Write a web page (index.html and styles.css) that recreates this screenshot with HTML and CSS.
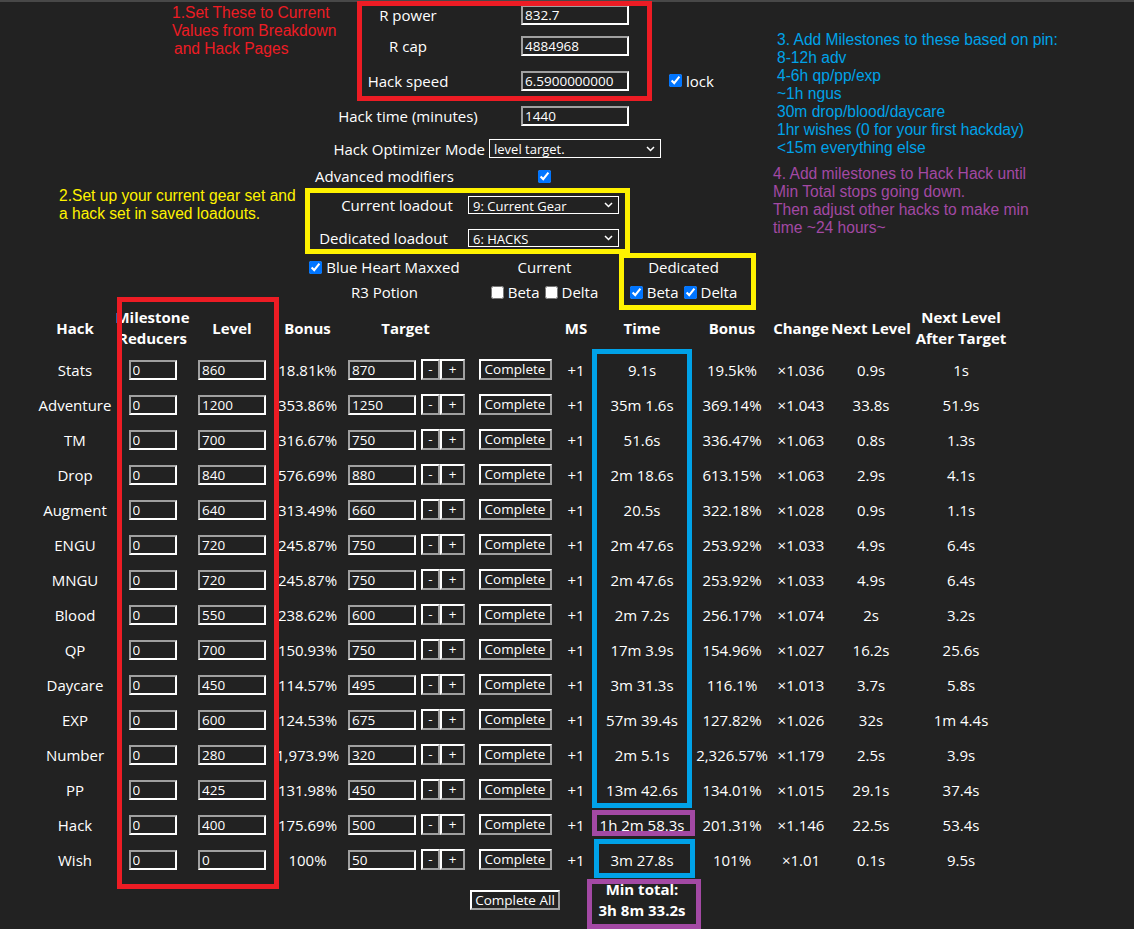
FILE: index.html
```html
<!DOCTYPE html>
<html lang="en">
<head>
<meta charset="utf-8">
<title>Hack Calculator</title>
<link rel="stylesheet" href="styles.css">
</head>
<body>
<section class="settings">
  <div class="frow field r1"><span class="flabel">R power</span><input class="inp topinp" value="832.7"></div>
  <div class="frow field"><span class="flabel">R cap</span><input class="inp topinp" value="4884968"></div>
  <div class="frow field"><span class="flabel">Hack speed</span><input class="inp topinp" value="6.5900000000"><label class="lock"><input type="checkbox" class="cb" checked>lock</label></div>
  <div class="frow field"><span class="flabel">Hack time (minutes)</span><input class="inp topinp" value="1440"></div>
  <div class="frow mode-row"><span class="mode-label">Hack Optimizer Mode</span><span class="selwrap sel-mode"><select class="sel"><option>level target.</option></select><svg class="chev" width="9" height="6" viewBox="0 0 9 6"><path d="M1 1l3.5 3.5L8 1" fill="none" stroke="#fff" stroke-width="1.5"/></svg></span></div>
  <div class="frow grid3 r6"><span class="cell">Advanced modifiers</span><span class="cell"><input type="checkbox" class="cb" checked></span><span class="cell"></span></div>
  <div class="frow load-cur"><span class="cell lbl-cur">Current loadout</span><span class="selwrap sel-load"><select class="sel"><option>9: Current Gear</option></select><svg class="chev" width="9" height="6" viewBox="0 0 9 6"><path d="M1 1l3.5 3.5L8 1" fill="none" stroke="#fff" stroke-width="1.5"/></svg></span></div>
  <div class="frow load-ded"><span class="cell lbl-ded">Dedicated loadout</span><span class="selwrap sel-load"><select class="sel"><option>6: HACKS</option></select><svg class="chev" width="9" height="6" viewBox="0 0 9 6"><path d="M1 1l3.5 3.5L8 1" fill="none" stroke="#fff" stroke-width="1.5"/></svg></span></div>
  <div class="frow grid3 r9"><span class="cell"><label class="chk"><input type="checkbox" class="cb" checked>Blue Heart Maxxed</label></span><span class="cell">Current</span><span class="cell">Dedicated</span></div>
  <div class="frow grid3 r10"><span class="cell">R3 Potion</span><span class="cell pots"><label class="chk"><input type="checkbox" class="cb">Beta</label><label class="chk"><input type="checkbox" class="cb">Delta</label></span><span class="cell pots"><label class="chk"><input type="checkbox" class="cb" checked>Beta</label><label class="chk"><input type="checkbox" class="cb" checked>Delta</label></span></div>
</section>

<section class="hacks">
  <div class="trow thead">
    <span class="c">Hack</span><span class="c">Milestone<br>Reducers</span><span class="c">Level</span><span class="c">Bonus</span><span class="c">Target</span><span class="c"></span><span class="c">MS</span><span class="c">Time</span><span class="c">Bonus</span><span class="c">Change</span><span class="c">Next Level</span><span class="c">Next Level<br>After Target</span>
  </div>
  <div class="trow"><span class="c">Stats</span><span class="c"><input class="inp ms" value="0"></span><span class="c"><input class="inp lv" value="860"></span><span class="c">18.81k%</span><span class="c tgt"><input class="inp lv" value="870"><button class="btn pm">-</button><button class="btn pl">+</button></span><span class="c"><button class="btn cpl">Complete</button></span><span class="c">+1</span><span class="c">9.1s</span><span class="c">19.5k%</span><span class="c">×1.036</span><span class="c">0.9s</span><span class="c">1s</span></div>
  <div class="trow"><span class="c">Adventure</span><span class="c"><input class="inp ms" value="0"></span><span class="c"><input class="inp lv" value="1200"></span><span class="c">353.86%</span><span class="c tgt"><input class="inp lv" value="1250"><button class="btn pm">-</button><button class="btn pl">+</button></span><span class="c"><button class="btn cpl">Complete</button></span><span class="c">+1</span><span class="c">35m 1.6s</span><span class="c">369.14%</span><span class="c">×1.043</span><span class="c">33.8s</span><span class="c">51.9s</span></div>
  <div class="trow"><span class="c">TM</span><span class="c"><input class="inp ms" value="0"></span><span class="c"><input class="inp lv" value="700"></span><span class="c">316.67%</span><span class="c tgt"><input class="inp lv" value="750"><button class="btn pm">-</button><button class="btn pl">+</button></span><span class="c"><button class="btn cpl">Complete</button></span><span class="c">+1</span><span class="c">51.6s</span><span class="c">336.47%</span><span class="c">×1.063</span><span class="c">0.8s</span><span class="c">1.3s</span></div>
  <div class="trow"><span class="c">Drop</span><span class="c"><input class="inp ms" value="0"></span><span class="c"><input class="inp lv" value="840"></span><span class="c">576.69%</span><span class="c tgt"><input class="inp lv" value="880"><button class="btn pm">-</button><button class="btn pl">+</button></span><span class="c"><button class="btn cpl">Complete</button></span><span class="c">+1</span><span class="c">2m 18.6s</span><span class="c">613.15%</span><span class="c">×1.063</span><span class="c">2.9s</span><span class="c">4.1s</span></div>
  <div class="trow"><span class="c">Augment</span><span class="c"><input class="inp ms" value="0"></span><span class="c"><input class="inp lv" value="640"></span><span class="c">313.49%</span><span class="c tgt"><input class="inp lv" value="660"><button class="btn pm">-</button><button class="btn pl">+</button></span><span class="c"><button class="btn cpl">Complete</button></span><span class="c">+1</span><span class="c">20.5s</span><span class="c">322.18%</span><span class="c">×1.028</span><span class="c">0.9s</span><span class="c">1.1s</span></div>
  <div class="trow"><span class="c">ENGU</span><span class="c"><input class="inp ms" value="0"></span><span class="c"><input class="inp lv" value="720"></span><span class="c">245.87%</span><span class="c tgt"><input class="inp lv" value="750"><button class="btn pm">-</button><button class="btn pl">+</button></span><span class="c"><button class="btn cpl">Complete</button></span><span class="c">+1</span><span class="c">2m 47.6s</span><span class="c">253.92%</span><span class="c">×1.033</span><span class="c">4.9s</span><span class="c">6.4s</span></div>
  <div class="trow"><span class="c">MNGU</span><span class="c"><input class="inp ms" value="0"></span><span class="c"><input class="inp lv" value="720"></span><span class="c">245.87%</span><span class="c tgt"><input class="inp lv" value="750"><button class="btn pm">-</button><button class="btn pl">+</button></span><span class="c"><button class="btn cpl">Complete</button></span><span class="c">+1</span><span class="c">2m 47.6s</span><span class="c">253.92%</span><span class="c">×1.033</span><span class="c">4.9s</span><span class="c">6.4s</span></div>
  <div class="trow"><span class="c">Blood</span><span class="c"><input class="inp ms" value="0"></span><span class="c"><input class="inp lv" value="550"></span><span class="c">238.62%</span><span class="c tgt"><input class="inp lv" value="600"><button class="btn pm">-</button><button class="btn pl">+</button></span><span class="c"><button class="btn cpl">Complete</button></span><span class="c">+1</span><span class="c">2m 7.2s</span><span class="c">256.17%</span><span class="c">×1.074</span><span class="c">2s</span><span class="c">3.2s</span></div>
  <div class="trow"><span class="c">QP</span><span class="c"><input class="inp ms" value="0"></span><span class="c"><input class="inp lv" value="700"></span><span class="c">150.93%</span><span class="c tgt"><input class="inp lv" value="750"><button class="btn pm">-</button><button class="btn pl">+</button></span><span class="c"><button class="btn cpl">Complete</button></span><span class="c">+1</span><span class="c">17m 3.9s</span><span class="c">154.96%</span><span class="c">×1.027</span><span class="c">16.2s</span><span class="c">25.6s</span></div>
  <div class="trow"><span class="c">Daycare</span><span class="c"><input class="inp ms" value="0"></span><span class="c"><input class="inp lv" value="450"></span><span class="c">114.57%</span><span class="c tgt"><input class="inp lv" value="495"><button class="btn pm">-</button><button class="btn pl">+</button></span><span class="c"><button class="btn cpl">Complete</button></span><span class="c">+1</span><span class="c">3m 31.3s</span><span class="c">116.1%</span><span class="c">×1.013</span><span class="c">3.7s</span><span class="c">5.8s</span></div>
  <div class="trow"><span class="c">EXP</span><span class="c"><input class="inp ms" value="0"></span><span class="c"><input class="inp lv" value="600"></span><span class="c">124.53%</span><span class="c tgt"><input class="inp lv" value="675"><button class="btn pm">-</button><button class="btn pl">+</button></span><span class="c"><button class="btn cpl">Complete</button></span><span class="c">+1</span><span class="c">57m 39.4s</span><span class="c">127.82%</span><span class="c">×1.026</span><span class="c">32s</span><span class="c">1m 4.4s</span></div>
  <div class="trow"><span class="c">Number</span><span class="c"><input class="inp ms" value="0"></span><span class="c"><input class="inp lv" value="280"></span><span class="c">1,973.9%</span><span class="c tgt"><input class="inp lv" value="320"><button class="btn pm">-</button><button class="btn pl">+</button></span><span class="c"><button class="btn cpl">Complete</button></span><span class="c">+1</span><span class="c">2m 5.1s</span><span class="c">2,326.57%</span><span class="c">×1.179</span><span class="c">2.5s</span><span class="c">3.9s</span></div>
  <div class="trow"><span class="c">PP</span><span class="c"><input class="inp ms" value="0"></span><span class="c"><input class="inp lv" value="425"></span><span class="c">131.98%</span><span class="c tgt"><input class="inp lv" value="450"><button class="btn pm">-</button><button class="btn pl">+</button></span><span class="c"><button class="btn cpl">Complete</button></span><span class="c">+1</span><span class="c">13m 42.6s</span><span class="c">134.01%</span><span class="c">×1.015</span><span class="c">29.1s</span><span class="c">37.4s</span></div>
  <div class="trow"><span class="c">Hack</span><span class="c"><input class="inp ms" value="0"></span><span class="c"><input class="inp lv" value="400"></span><span class="c">175.69%</span><span class="c tgt"><input class="inp lv" value="500"><button class="btn pm">-</button><button class="btn pl">+</button></span><span class="c"><button class="btn cpl">Complete</button></span><span class="c">+1</span><span class="c">1h 2m 58.3s</span><span class="c">201.31%</span><span class="c">×1.146</span><span class="c">22.5s</span><span class="c">53.4s</span></div>
  <div class="trow"><span class="c">Wish</span><span class="c"><input class="inp ms" value="0"></span><span class="c"><input class="inp lv" value="0"></span><span class="c">100%</span><span class="c tgt"><input class="inp lv" value="50"><button class="btn pm">-</button><button class="btn pl">+</button></span><span class="c"><button class="btn cpl">Complete</button></span><span class="c">+1</span><span class="c">3m 27.8s</span><span class="c">101%</span><span class="c">×1.01</span><span class="c">0.1s</span><span class="c">9.5s</span></div>
  <div class="trow tfoot">
    <span class="c"></span><span class="c"></span><span class="c"></span><span class="c"></span><span class="c"></span><span class="c"><button class="btn cpl-all">Complete All</button></span><span class="c"></span><span class="c mintotal">Min total:<br>3h 8m 33.2s</span>
  </div>
</section>

<div class="note note-red">1.Set These to Current<br>Values from Breakdown<br><span class="indent">and Hack Pages</span></div>
<div class="note note-yellow">2.Set up your current gear set and<br>a hack set in saved loadouts.</div>
<div class="note note-blue">3. Add Milestones to these based on pin:<br>8-12h adv<br>4-6h qp/pp/exp<br>~1h ngus<br>30m drop/blood/daycare<br>1hr wishes (0 for your first hackday)<br>&lt;15m everything else</div>
<div class="note note-purple">4. Add milestones to Hack Hack until<br>Min Total stops going down.<br>Then adjust other hacks to make min<br>time ~24 hours~</div>

<div class="mark mark-red-top"></div>
<div class="mark mark-red-big"></div>
<div class="mark mark-yellow-1"></div>
<div class="mark mark-yellow-2"></div>
<div class="mark mark-blue-big"></div>
<div class="mark mark-purple-hack"></div>
<div class="mark mark-blue-wish"></div>
<div class="mark mark-purple-min"></div>
</body>
</html>
```
FILE: styles.css
```css
html {
  background: #222222;
  overflow: hidden;
}
body {
  margin: 0;
  border-top: 2px solid #484848;
  background: #222222;
  color: #ffffff;
  font-family: "Open Sans", "Noto Sans", sans-serif;
  font-size: 15px;
  overflow: hidden;
  height: 927px;
}

/* ---------- settings block ---------- */
.settings {
  display: flex;
  flex-direction: column;
}
.frow {
  display: flex;
  align-items: center;
  white-space: nowrap;
}
.field {
  height: 35px;
  padding-left: 308px;
}
.field.r1 {
  height: 26px;
}
.flabel {
  width: 200px;
  display: flex;
  justify-content: center;
}
.inp {
  box-sizing: border-box;
  height: 20px;
  margin: 0;
  padding: 0 2px;
  background: #222222;
  color: #ffffff;
  border: 2px solid;
  border-color: #a0a0a0 #ffffff #ffffff #a0a0a0;
  font-family: "Open Sans", "Noto Sans", sans-serif;
  font-size: 13.5px;
  font-weight: 500;
}
.topinp {
  width: 108px;
  margin-left: 13px;
}
.cb {
  width: 13px;
  height: 13px;
  margin: 0;
}
.lock {
  display: inline-flex;
  align-items: center;
  gap: 4px;
  margin-left: 40px;
}
.mode-row {
  height: 31px;
  padding-left: 308px;
}
.mode-label {
  width: 177px;
  display: flex;
  justify-content: flex-end;
}
.selwrap {
  position: relative;
  display: inline-block;
}
.sel {
  appearance: none;
  -webkit-appearance: none;
  box-sizing: border-box;
  display: block;
  margin: 0;
  padding: 0 0 0 4px;
  background: #222222;
  color: #ffffff;
  border: 1px solid #ffffff;
  border-radius: 0;
  font-family: "Open Sans", "Noto Sans", sans-serif;
  font-size: 13px;
  font-weight: 500;
}
.chev {
  position: absolute;
  right: 6px;
  top: 7px;
  pointer-events: none;
}
.sel-mode {
  margin-left: 4px;
}
.sel-mode .sel {
  width: 172px;
  height: 19px;
}
.sel-load .sel {
  width: 151px;
  height: 18px;
}
.sel-load .chev {
  top: 6px;
}
.cell {
  display: flex;
  justify-content: center;
  align-items: center;
}
.grid3 {
  display: grid;
  grid-template-columns: 159px 161px 117px;
  padding-left: 305px;
}
.r6 {
  height: 24px;
}
.load-cur {
  height: 34px;
  padding-left: 327px;
}
.lbl-cur {
  width: 140px;
}
.load-cur .selwrap {
  margin-left: 1px;
}
.load-ded {
  height: 32px;
  padding-left: 308px;
}
.lbl-ded {
  width: 151px;
}
.load-ded .selwrap {
  margin-left: 9px;
}
.r9 {
  height: 26px;
}
.r10 {
  height: 24px;
}
.chk {
  display: inline-flex;
  align-items: center;
  gap: 4px;
}
.pots {
  gap: 5px;
}

/* ---------- hacks table ---------- */
.hacks {
  margin-left: 35px;
}
.trow {
  display: grid;
  grid-template-columns: 80px 75px 84px 67px 129px 90px 32px 100px 80px 58px 82px 98px;
  height: 35px;
  align-items: center;
}
.c {
  display: flex;
  justify-content: center;
  align-items: center;
  white-space: nowrap;
  text-align: center;
}
.thead {
  height: 48px;
  font-weight: 700;
  line-height: 21px;
}
.ms {
  width: 48px;
}
.lv {
  width: 68px;
}
.tgt {
  justify-content: flex-start;
  padding-left: 7px;
}
.btn {
  box-sizing: border-box;
  height: 21px;
  margin: 0;
  padding: 0;
  background: #222222;
  color: #ffffff;
  border: 2px solid;
  border-color: #ffffff #a0a0a0 #a0a0a0 #ffffff;
  font-family: "Open Sans", "Noto Sans", sans-serif;
  font-size: 13.5px;
  font-weight: 500;
  line-height: 15px;
}
.pm {
  width: 19px;
  margin-left: 5px;
}
.pl {
  width: 25px;
}
.cpl {
  width: 73px;
}
.cpl-all {
  width: 90px;
  height: 20px;
}
.tfoot {
  height: 46px;
  align-items: start;
  padding-top: 2px;
}
.tfoot .c {
  height: 42px;
}
.mintotal {
  font-weight: 700;
  line-height: 21px;
}

/* ---------- paint annotations (overlay) ---------- */
.note {
  position: absolute;
  font-family: "Liberation Sans", Arial, sans-serif;
  font-size: 15.6px;
  line-height: 18px;
  white-space: nowrap;
}
.note-red {
  left: 172px;
  top: 4px;
  color: #ed1c24;
}
.indent {
  padding-left: 2px;
}
.note-yellow {
  left: 59px;
  top: 187px;
  color: #fff200;
}
.note-blue {
  left: 777px;
  top: 31px;
  color: #00a2e8;
}
.note-purple {
  left: 773px;
  top: 165px;
  color: #a349a4;
}
.mark {
  position: absolute;
  box-sizing: border-box;
  border: 5px solid;
  pointer-events: none;
}
.mark-red-top {
  left: 357px;
  top: 1px;
  width: 295px;
  height: 100px;
  border-color: #ed1c24;
}
.mark-red-big {
  left: 117px;
  top: 297px;
  width: 162px;
  height: 592px;
  border-color: #ed1c24;
}
.mark-yellow-1 {
  left: 305px;
  top: 188px;
  width: 325px;
  height: 66px;
  border-color: #fff200;
}
.mark-yellow-2 {
  left: 619px;
  top: 253px;
  width: 137px;
  height: 57px;
  border-color: #fff200;
}
.mark-blue-big {
  left: 592px;
  top: 349px;
  width: 100px;
  height: 459px;
  border-color: #00a2e8;
}
.mark-purple-hack {
  left: 592px;
  top: 810px;
  width: 103px;
  height: 26px;
  border-color: #a349a4;
}
.mark-blue-wish {
  left: 594px;
  top: 839px;
  width: 101px;
  height: 39px;
  border-color: #00a2e8;
}
.mark-purple-min {
  left: 587px;
  top: 879px;
  width: 114px;
  height: 50px;
  border-color: #a349a4;
}
```
